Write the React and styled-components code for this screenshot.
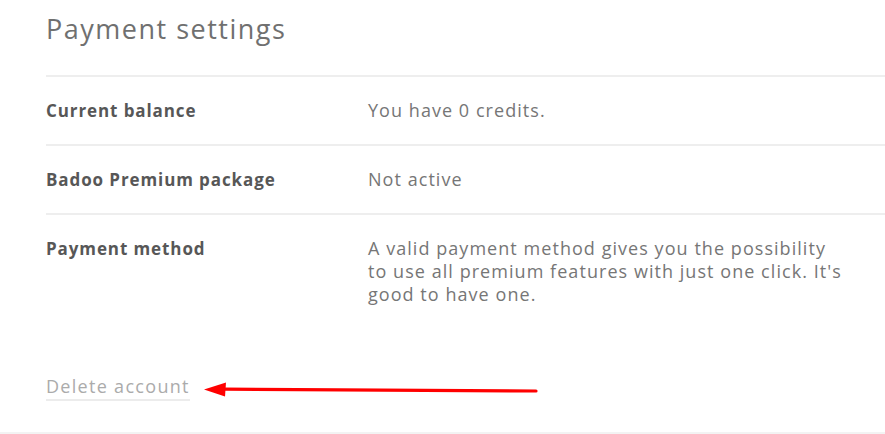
import React from 'react';
import styled, { createGlobalStyle } from 'styled-components';

const GlobalStyle = createGlobalStyle`
    html, body {
        margin: 0;
        padding: 0;
        background: #ffffff;
    }
    body {
        font-family: "Open Sans", "Noto Sans", sans-serif;
    }
`

const Page = styled.div`
    box-sizing: border-box;
    height: 434px;
    padding: 0 0 0 46px;
    border-bottom: 2px solid #f3f3f3;
    overflow: hidden;
`

const Title = styled.h1`
    margin: 0;
    height: 75px;
    padding-top: 12px;
    box-sizing: border-box;
    font-size: 27px;
    line-height: 34px;
    font-weight: 400;
    color: #707070;
    letter-spacing: 1.5px;
`

const Table = styled.div`
    border-top: 2px solid #eeeeee;
`

const Row = styled.div`
    display: grid;
    grid-template-columns: 322px 1fr;
    padding: 22px 0;
    border-bottom: ${props => props.last ? 'none' : '2px solid #eeeeee'};
    line-height: 23px;
`

const Label = styled.div`
    font-size: 17px;
    font-weight: 700;
    letter-spacing: 0.9px;
    color: #575757;
`

const Value = styled.div`
    font-size: 18px;
    letter-spacing: 1.05px;
    color: #767676;
    max-width: ${props => props.wide ? '475px' : 'none'};
`

const Footer = styled.div`
    display: flex;
    align-items: center;
    gap: 13px;
    margin-top: 47px;
`

const DeleteLink = styled.a`
    font-size: 18px;
    letter-spacing: 1.3px;
    line-height: 23px;
    color: #ababab;
    text-decoration: none;
    border-bottom: 2px solid #ececec;
    padding-bottom: 1px;
    cursor: pointer;
`

const Arrow = () => (
    <svg width="336" height="20" viewBox="0 0 336 20" style={{ marginTop: 3 }}>
        <path d="M22 9.2 L333 11" stroke="#ff0000" strokeWidth="3.2" strokeLinecap="round" />
        <path d="M1 9.5 L23 2.5 L22 16.5 Z" fill="#ff0000" />
    </svg>
)

const rows = [
    { label: 'Current balance', value: 'You have 0 credits.' },
    { label: 'Badoo Premium package', value: 'Not active' },
    {
        label: 'Payment method',
        value: "A valid payment method gives you the possibility to use all premium features with just one click. It's good to have one.",
        wide: true,
    },
]

export default function App() {
    return (
        <>
            <GlobalStyle />
            <Page>
                <Title>Payment settings</Title>
                <Table>
                    {rows.map((r, i) => (
                        <Row key={r.label} last={i === rows.length - 1}>
                            <Label>{r.label}</Label>
                            <Value wide={r.wide}>{r.value}</Value>
                        </Row>
                    ))}
                </Table>
                <Footer>
                    <DeleteLink>Delete account</DeleteLink>
                    <Arrow />
                </Footer>
            </Page>
        </>
    )
}
